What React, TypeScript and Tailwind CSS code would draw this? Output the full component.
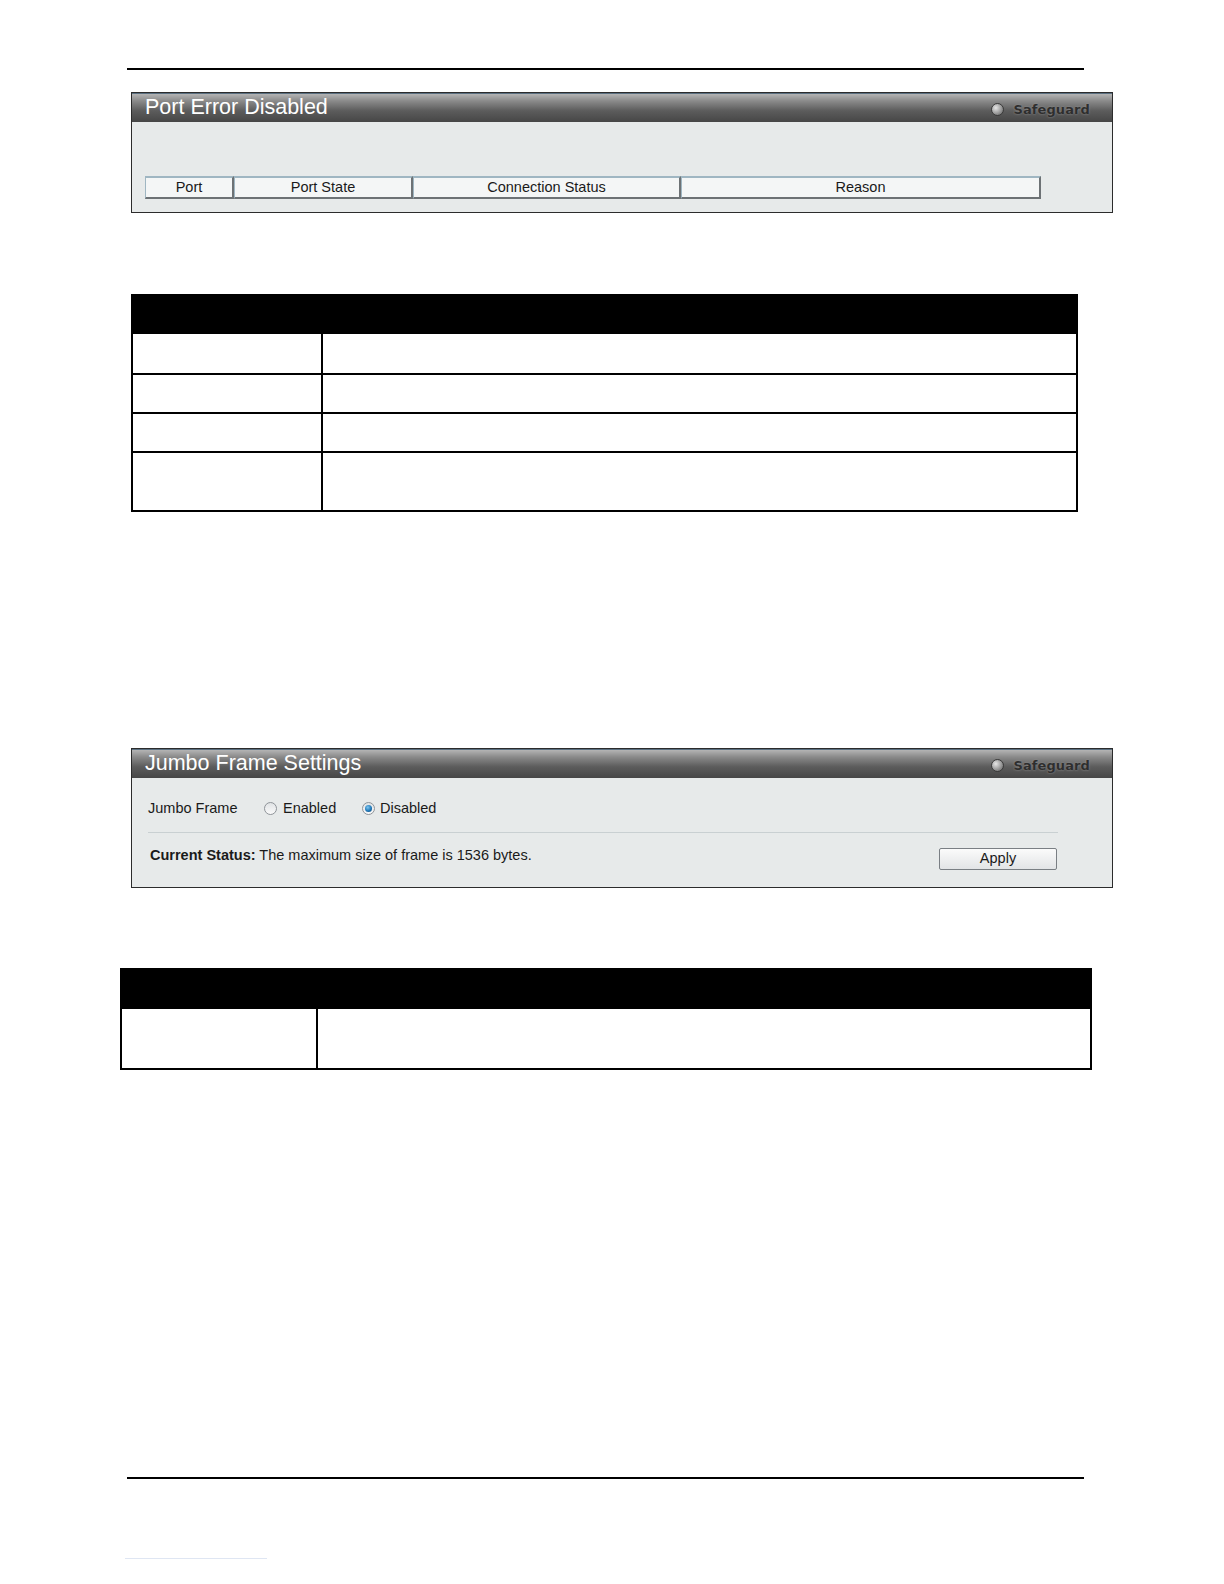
import React from "react";

function PanelHeader({ title }: { title: string }) {
  return (
    <div className="flex h-[29px] items-center justify-between border-t border-[#5a6f80] bg-[linear-gradient(to_bottom,#b4b4b4_0%,#8a8a8a_25%,#5c5c5c_60%,#464646_100%)] pl-[13px] pr-[22px]">
      <span className="text-[21.5px] leading-none text-white [font-family:'Liberation_Sans',Arial,sans-serif]">
        {title}
      </span>
      <div className="flex items-center gap-[9px] pt-[2px]">
        <span className="h-[13px] w-[13px] rounded-full border border-[#3a3a3a] bg-[radial-gradient(circle_at_35%_35%,#e6e6e6_0%,#9a9a9a_55%,#5a5a5a_100%)]" />
        <span className="text-[13px] font-bold leading-none tracking-[0.1px] text-[#2e2e2e] [text-shadow:0_0_2px_#9a9a9a] [font-family:'DejaVu_Sans',sans-serif]">
          Safeguard
        </span>
      </div>
    </div>
  );
}

function HeadCell({ w, children }: { w: string; children: React.ReactNode }) {
  return (
    <div
      className={`${w} flex h-[23px] items-center justify-center border-b-2 border-l border-r-2 border-t-2 border-b-[#6d7275] border-l-[#9fb6c2] border-r-[#6d7275] border-t-[#9fb6c2] bg-[#f4f6f6] text-[14.5px] text-[#1a1a1a]`}
    >
      {children}
    </div>
  );
}

function Radio({ checked }: { checked?: boolean }) {
  return (
    <span className="flex h-[13px] w-[13px] items-center justify-center rounded-full border border-[#8f9499] bg-[linear-gradient(to_bottom,#e0e3e5,#fafafa)]">
      {checked && (
        <span className="h-[7px] w-[7px] rounded-full bg-[radial-gradient(circle_at_40%_35%,#7ec6f0_0%,#1f78b8_55%,#0d3f6e_100%)]" />
      )}
    </span>
  );
}

export default function App() {
  return (
    <div className="bg-white [font-family:'Liberation_Sans',Arial,sans-serif]">
      <div className="flex flex-col">
        {/* top rule */}
        <div className="ml-[127px] mt-[68px] h-[2px] w-[957px] bg-black" />

        {/* Port Error Disabled panel */}
        <div className="ml-[131px] mt-[22px] h-[121px] w-[982px] border border-[#2c2c2c] bg-[#e7eaea]">
          <PanelHeader title="Port Error Disabled" />
          <div className="ml-[13px] mt-[54px] flex">
            <HeadCell w="w-[89px]">Port</HeadCell>
            <HeadCell w="w-[179px]">Port State</HeadCell>
            <HeadCell w="w-[268px]">Connection Status</HeadCell>
            <HeadCell w="w-[360px]">Reason</HeadCell>
          </div>
        </div>

        {/* Table 1 */}
        <div className="ml-[131px] mt-[81px] w-[947px] border-2 border-black">
          <div className="h-[38px] bg-black" />
          <div className="flex h-[39px]">
            <div className="w-[190px] border-r-2 border-black" />
            <div className="flex-1" />
          </div>
          <div className="flex h-[39px] border-t-2 border-black">
            <div className="w-[190px] border-r-2 border-black" />
            <div className="flex-1" />
          </div>
          <div className="flex h-[39px] border-t-2 border-black">
            <div className="w-[190px] border-r-2 border-black" />
            <div className="flex-1" />
          </div>
          <div className="flex h-[59px] border-t-2 border-black">
            <div className="w-[190px] border-r-2 border-black" />
            <div className="flex-1" />
          </div>
        </div>

        {/* Jumbo Frame Settings panel */}
        <div className="ml-[131px] mt-[236px] h-[140px] w-[982px] border border-[#2c2c2c] bg-[#e7eaea]">
          <PanelHeader title="Jumbo Frame Settings" />
          <div className="ml-[16px] mt-[20px] flex items-center text-[14.5px] text-[#1a1a1a]">
            <span className="w-[116px]">Jumbo Frame</span>
            <Radio />
            <span className="ml-[6px] w-[79px]">Enabled</span>
            <Radio checked />
            <span className="ml-[5px]">Disabled</span>
          </div>
          <div className="ml-[16px] mt-[12px] h-px w-[910px] bg-[#c9d0d2]" />
          <div className="ml-[18px] mt-[10px] flex w-[907px] items-center justify-between text-[14.5px] text-[#1a1a1a]">
            <span>
              <b>Current Status:</b> The maximum size of frame is 1536 bytes.
            </span>
            <button className="mt-[5px] flex h-[22px] w-[118px] items-center justify-center rounded-[2px] border border-[#7a7f84] bg-[linear-gradient(to_bottom,#fbfbfb,#e2e4e6)] text-[14.5px] text-[#1a1a1a]">
              Apply
            </button>
          </div>
        </div>

        {/* Table 2 */}
        <div className="ml-[120px] mt-[80px] w-[972px] border-2 border-black">
          <div className="h-[39px] bg-black" />
          <div className="flex h-[59px]">
            <div className="w-[196px] border-r-2 border-black" />
            <div className="flex-1" />
          </div>
        </div>

        {/* bottom rule */}
        <div className="ml-[127px] mt-[407px] h-[2px] w-[957px] bg-black" />

        {/* faint link underline */}
        <div className="ml-[125px] mt-[79px] h-px w-[142px] bg-[#dfe6f3]" />
      </div>
    </div>
  );
}
